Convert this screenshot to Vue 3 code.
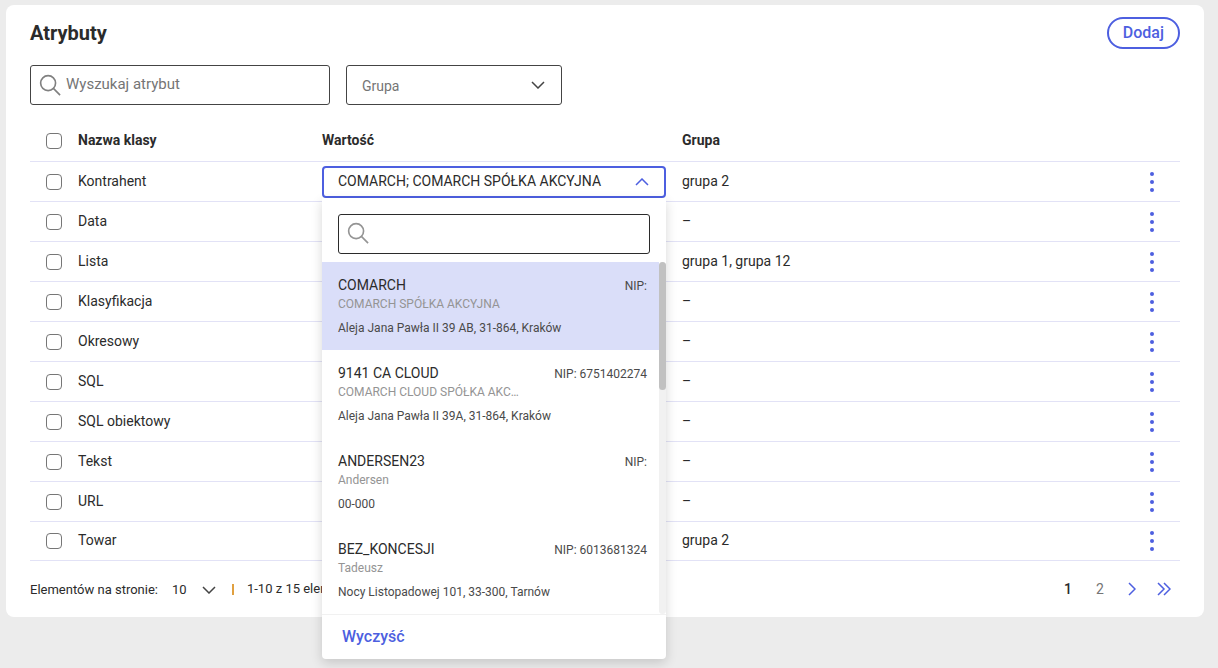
<script setup>
import { ref } from 'vue'

const rows = [
  { name: 'Kontrahent', group: 'grupa 2', open: true },
  { name: 'Data', group: '–' },
  { name: 'Lista', group: 'grupa 1, grupa 12' },
  { name: 'Klasyfikacja', group: '–' },
  { name: 'Okresowy', group: '–' },
  { name: 'SQL', group: '–' },
  { name: 'SQL obiektowy', group: '–' },
  { name: 'Tekst', group: '–' },
  { name: 'URL', group: '–' },
  { name: 'Towar', group: 'grupa 2' },
]

const contractors = [
  { code: 'COMARCH', name: 'COMARCH SPÓŁKA AKCYJNA', nip: '', address: 'Aleja Jana Pawła II 39 AB, 31-864, Kraków' },
  { code: '9141 CA CLOUD', name: 'COMARCH CLOUD SPÓŁKA AKC…', nip: '6751402274', address: 'Aleja Jana Pawła II 39A, 31-864, Kraków' },
  { code: 'ANDERSEN23', name: 'Andersen', nip: '', address: '00-000' },
  { code: 'BEZ_KONCESJI', name: 'Tadeusz', nip: '6013681324', address: 'Nocy Listopadowej 101, 33-300, Tarnów' },
]

const selected = ref('COMARCH')
</script>

<template>
  <div class="page">
    <main class="card">
      <header class="head">
        <h1>Atrybuty</h1>
        <button type="button" class="add">Dodaj</button>
      </header>

      <div class="filters">
        <div class="search">
          <svg class="lens" viewBox="0 0 24 24" aria-hidden="true"><circle cx="9.5" cy="9.5" r="7.8" /><path d="M15 15l7 7" /></svg>
          <input type="text" aria-label="Wyszukaj atrybut" placeholder="Wyszukaj atrybut" />
        </div>
        <div class="group-filter">
          <select aria-label="Grupa"><option>Grupa</option></select>
          <svg class="chevron" viewBox="0 0 14 8" aria-hidden="true"><path d="M1 1l6 6 6-6" /></svg>
        </div>
      </div>

      <table>
        <colgroup>
          <col class="c-check" /><col class="c-name" /><col class="c-value" /><col /><col class="c-menu" />
        </colgroup>
        <thead>
          <tr>
            <th class="check"><input type="checkbox" aria-label="Zaznacz wszystkie" /></th>
            <th>Nazwa klasy</th>
            <th>Wartość</th>
            <th>Grupa</th>
            <th></th>
          </tr>
        </thead>
        <tbody>
          <tr v-for="row in rows" :key="row.name">
            <td class="check"><input type="checkbox" :aria-label="row.name" /></td>
            <td>{{ row.name }}</td>
            <td class="value">
              <div v-if="row.open" class="combo">
                <button type="button" class="combo-button" aria-expanded="true">
                  <span>COMARCH; COMARCH SPÓŁKA AKCYJNA</span>
                  <svg class="chevron up" viewBox="0 0 14 8" aria-hidden="true"><path d="M1 7l6-6 6 6" /></svg>
                </button>
                <div class="popup">
                  <div class="search popup-search">
                    <svg class="lens" viewBox="0 0 24 24" aria-hidden="true"><circle cx="9.5" cy="9.5" r="7.8" /><path d="M15 15l7 7" /></svg>
                    <input type="text" aria-label="Szukaj kontrahenta" />
                  </div>
                  <div class="list-wrap">
                    <ul class="list" role="listbox" aria-label="Kontrahent">
                      <li
                        v-for="item in contractors"
                        :key="item.code"
                        role="option"
                        :aria-selected="item.code === selected"
                        :class="{ active: item.code === selected }"
                        @click="selected = item.code"
                      >
                        <div class="line"><span class="code">{{ item.code }}</span><span class="nip">NIP: {{ item.nip }}</span></div>
                        <div class="full">{{ item.name }}</div>
                        <div class="address">{{ item.address }}</div>
                      </li>
                    </ul>
                    <div class="track"><div class="thumb"></div></div>
                  </div>
                  <div class="popup-foot"><button type="button" class="clear">Wyczyść</button></div>
                </div>
              </div>
            </td>
            <td>{{ row.group }}</td>
            <td class="menu">
              <button type="button" :aria-label="'Opcje: ' + row.name">
                <svg viewBox="0 0 4 20" aria-hidden="true"><circle cx="2" cy="2" r="2" /><circle cx="2" cy="10" r="2" /><circle cx="2" cy="18" r="2" /></svg>
              </button>
            </td>
          </tr>
        </tbody>
      </table>

      <footer class="foot">
        <label for="page-size">Elementów na stronie:</label>
        <div class="page-size">
          <select id="page-size"><option>10</option></select>
          <svg class="chevron" viewBox="0 0 14 8" aria-hidden="true"><path d="M1 1l6 6 6-6" /></svg>
        </div>
        <span class="divider"></span>
        <span class="range">1-10 z 15 elementów</span>
        <nav class="pages" aria-label="Strony">
          <button type="button" class="current">1</button>
          <button type="button">2</button>
          <button type="button" aria-label="Następna">
            <svg width="8" height="14" viewBox="0 0 8 14" aria-hidden="true"><path d="M1 1l6 6-6 6" /></svg>
          </button>
          <button type="button" aria-label="Ostatnia">
            <svg width="14" height="14" viewBox="0 0 14 14" aria-hidden="true"><path d="M1 1l6 6-6 6M7 1l6 6-6 6" /></svg>
          </button>
        </nav>
      </footer>
    </main>
  </div>
</template>

<style>
html {
  background: #ececec;
}
</style>

<style scoped>
* {
  box-sizing: border-box;
}
.page {
  min-height: 100vh;
  padding: 5px 14px 0 6px;
  background: #ececec;
}
.card {
  padding: 12px 24px;
  border-radius: 8px;
  background: #fff;
  color: #2b2b2b;
  font: 14px/20px Roboto, sans-serif;
}
button,
input,
select {
  font: inherit;
  color: inherit;
}
button {
  padding: 0;
  border: 0;
  background: none;
  cursor: pointer;
}
svg {
  display: block;
  fill: none;
}
.head {
  display: flex;
  justify-content: space-between;
  align-items: center;
  height: 32px;
}
h1 {
  margin: 0;
  font-size: 20px;
  line-height: 24px;
  font-weight: 700;
}
.add {
  height: 32px;
  padding: 0 14px;
  border: 2px solid #4d5fe0;
  border-radius: 16px;
  color: #4d5fe0;
  font-size: 16px;
  font-weight: 500;
}
.filters {
  display: flex;
  gap: 16px;
  margin-top: 16px;
}
.search {
  display: flex;
  align-items: center;
  width: 300px;
  height: 40px;
  padding: 0 8px;
  border: 1px solid #444;
  border-radius: 3px;
}
.lens {
  flex: none;
  width: 23px;
  height: 23px;
  stroke: #808080;
  stroke-width: 1.7;
}
.search input {
  flex: 1;
  min-width: 0;
  height: 36px;
  padding: 0 4px 2px;
  border: 0;
  outline: 0;
  background: none;
  font-size: 15px;
}
.search input::placeholder {
  color: #757575;
}
.group-filter,
.page-size {
  display: grid;
  align-items: center;
}
.group-filter > *,
.page-size > * {
  grid-area: 1 / 1;
}
.group-filter select {
  width: 216px;
  height: 40px;
  padding: 2px 15px 0;
  border: 1px solid #444;
  border-radius: 3px;
  background: none;
  color: #757575;
  appearance: none;
}
.chevron {
  justify-self: end;
  width: 14px;
  height: 8px;
  stroke: #444;
  stroke-width: 1.5;
  pointer-events: none;
}
.group-filter .chevron {
  margin-right: 17px;
}
table {
  width: 100%;
  margin-top: 16px;
  border-collapse: separate;
  border-spacing: 0;
  table-layout: fixed;
}
.c-check {
  width: 48px;
}
.c-name {
  width: 244px;
}
.c-value {
  width: 360px;
}
.c-menu {
  width: 56px;
}
th,
td {
  height: 40px;
  padding: 0 0 2px;
  border-bottom: 1px solid #e2e2f6;
  text-align: left;
  vertical-align: middle;
}
th {
  height: 41px;
  font-weight: 700;
}
tbody tr:last-child td {
  height: 39px;
}
.check {
  padding: 0 0 0 16px;
}
.check input {
  display: block;
  width: 16px;
  height: 16px;
  margin: 0;
  border: 1px solid #767676;
  border-radius: 4px;
  background: #fff;
  appearance: none;
}
.check input:checked {
  background: #4d5fe0;
}
.value,
.menu {
  padding: 0;
}
.menu button {
  display: block;
  width: 56px;
  height: 20px;
  padding-left: 26px;
}
.menu svg {
  width: 4px;
  height: 20px;
  fill: #4d5fe0;
}
.combo {
  position: relative;
  width: 344px;
}
.combo-button {
  display: flex;
  justify-content: space-between;
  align-items: center;
  width: 100%;
  height: 32px;
  padding: 0 15px 0 14px;
  border: 2px solid #4d5fe0;
  border-radius: 4px;
}
.combo-button span {
  padding-bottom: 2px;
}
.chevron.up {
  stroke: #4d5fe0;
}
.popup {
  position: absolute;
  z-index: 2;
  top: 100%;
  left: 0;
  width: 100%;
  padding-top: 16px;
  border-radius: 0 0 4px 4px;
  background: #fff;
  box-shadow: 0 4px 12px rgba(0, 0, 0, 0.16);
}
.popup-search {
  width: auto;
  margin: 0 16px 8px;
  border-color: #2b2b2b;
}
.popup-search .lens {
  stroke: #949494;
}
.list-wrap {
  display: flex;
}
.list {
  flex: 1;
  margin: 0;
  padding: 0;
  list-style: none;
}
.list li {
  height: 88px;
  padding: 13px 12px 0 16px;
  cursor: pointer;
}
.list li.active {
  background: #dadef9;
}
.line {
  display: flex;
  justify-content: space-between;
  align-items: baseline;
  height: 20px;
}
.nip,
.full,
.address {
  font-size: 12px;
}
.nip,
.address {
  color: #4a4a4a;
}
.full {
  line-height: 18px;
  color: #949494;
}
.address {
  margin-top: 6px;
  line-height: 18px;
}
.track {
  width: 7px;
  border-radius: 4px;
  background: #f1f1f1;
}
.thumb {
  height: 128px;
  border-radius: 4px;
  background: #c1c1c1;
}
.popup-foot {
  display: flex;
  align-items: center;
  height: 45px;
  padding: 0 20px;
  border-top: 1px solid #f1f1f1;
}
.clear {
  color: #4d5fe0;
  font-size: 16px;
  font-weight: 500;
}
.foot {
  display: flex;
  align-items: center;
  height: 32px;
  margin-top: 12px;
  font-size: 13px;
}
.foot label,
.page-size {
  padding-top: 2px;
}
.page-size {
  margin-left: 14px;
}
.page-size select {
  width: 44px;
  padding: 0;
  border: 0;
  background: none;
  appearance: none;
}
.divider {
  width: 2px;
  height: 11px;
  margin: 0 13px 0 16px;
  background: #e0a040;
}
.pages {
  display: flex;
  margin-left: auto;
  font-size: 14px;
}
.pages button {
  display: grid;
  place-items: center;
  width: 32px;
  height: 32px;
  color: #757575;
}
.pages .current {
  color: #2b2b2b;
  font-weight: 500;
}
.pages svg {
  stroke: #4d5fe0;
  stroke-width: 1.5;
}
</style>
